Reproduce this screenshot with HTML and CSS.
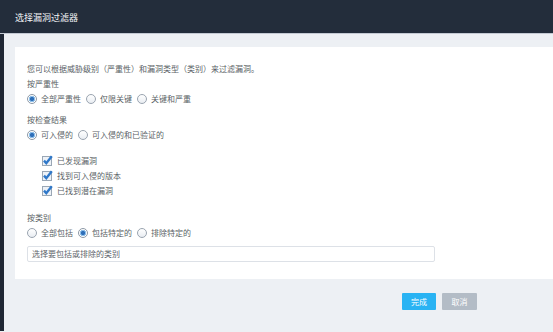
FILE: index.html
```html
<!DOCTYPE html>
<html lang="zh">
<head>
  <meta charset="UTF-8">
  <meta name="viewport" content="width=device-width, initial-scale=1.0">
  <title>选择漏洞过滤器</title>
  <link rel="stylesheet" href="styles.css">
</head>
<body>
  <header class="dialog-header">选择漏洞过滤器</header>
  <div class="dialog-body">
    <div class="panel">
      <p class="intro">您可以根据威胁级别（严重性）和漏洞类型（类别）来过滤漏洞。</p>
      <div class="group-title">按严重性</div>
      <div class="radio-row">
        <label class="opt"><input type="radio" name="sev" checked><span>全部严重性</span></label>
        <label class="opt"><input type="radio" name="sev"><span>仅限关键</span></label>
        <label class="opt"><input type="radio" name="sev"><span>关键和严重</span></label>
      </div>

      <div class="group-title gap">按检查结果</div>
      <div class="radio-row">
        <label class="opt"><input type="radio" name="res" checked><span>可入侵的</span></label>
        <label class="opt"><input type="radio" name="res"><span>可入侵的和已验证的</span></label>
      </div>

      <div class="checks">
        <label class="check"><span class="box"><svg width="11" height="11" viewBox="0 0 11 11"><rect x="0.5" y="1.5" width="9" height="9" fill="#eef2f7" stroke="#9aa7b5"/><path d="M2 5.6 L4.3 8.2 L9.8 1.2" fill="none" stroke="#2f78c9" stroke-width="2.4"/></svg></span>已发现漏洞</label>
        <label class="check"><span class="box"><svg width="11" height="11" viewBox="0 0 11 11"><rect x="0.5" y="1.5" width="9" height="9" fill="#eef2f7" stroke="#9aa7b5"/><path d="M2 5.6 L4.3 8.2 L9.8 1.2" fill="none" stroke="#2f78c9" stroke-width="2.4"/></svg></span>找到可入侵的版本</label>
        <label class="check"><span class="box"><svg width="11" height="11" viewBox="0 0 11 11"><rect x="0.5" y="1.5" width="9" height="9" fill="#eef2f7" stroke="#9aa7b5"/><path d="M2 5.6 L4.3 8.2 L9.8 1.2" fill="none" stroke="#2f78c9" stroke-width="2.4"/></svg></span>已找到潜在漏洞</label>
      </div>

      <div class="group-title gap-lg">按类别</div>
      <div class="radio-row">
        <label class="opt"><input type="radio" name="cat"><span>全部包括</span></label>
        <label class="opt"><input type="radio" name="cat" checked><span>包括特定的</span></label>
        <label class="opt"><input type="radio" name="cat"><span>排除特定的</span></label>
      </div>
      <div class="category-input">选择要包括或排除的类别</div>
    </div>
    <div class="footer">
      <button class="btn btn-primary">完成</button>
      <button class="btn btn-muted">取消</button>
    </div>
  </div>
</body>
</html>
```

FILE: styles.css
```css
body {
  margin: 0;
  width: 553px;
  height: 332px;
  overflow: hidden;
  background: #edf0f4;
  font-family: "Noto Sans CJK SC", "Noto Sans", sans-serif;
  color: #5a5f66;
}
.dialog-header {
  height: 34px;
  box-sizing: border-box;
  padding: 2px 0 0 15px;
  display: flex;
  align-items: center;
  background: #232d3b;
  color: #f2f4f7;
  font-size: 9px;
  border-bottom: 1px solid #c3c9d3;
}
.dialog-body {
  border-left: 4px solid #1f2734;
  height: 297px;
  box-sizing: border-box;
  padding: 13px 0 0 11px;
}
.panel {
  background: #fff;
  padding: 14px 0 17px 12px;
  font-size: 8px;
  line-height: 15px;
}
.intro {
  margin: 0;
}
.group-title.gap {
  margin-top: 6px;
}
.group-title.gap-lg {
  margin-top: 12px;
}
.radio-row {
  display: flex;
  align-items: center;
  height: 15px;
}
.opt {
  display: flex;
  align-items: center;
  margin-right: 5px;
}
.opt input {
  appearance: none;
  -webkit-appearance: none;
  width: 10px;
  height: 10px;
  margin: 0 4px 0 0;
  border: 1px solid #9aa4b0;
  border-radius: 50%;
  background: linear-gradient(#ffffff, #e9edf2);
  box-sizing: border-box;
}
.opt input:checked {
  background: radial-gradient(circle, #2f6fb8 0 1.8px, #8fc0ea 2.4px 3px, #ffffff 3.4px);
  border-color: #8c98a6;
}
.checks {
  margin-top: 11px;
  padding-left: 15px;
}
.check {
  display: flex;
  align-items: center;
  height: 15px;
}
.check .box {
  width: 11px;
  height: 11px;
  margin-right: 4px;
  display: flex;
}
.category-input {
  margin-top: 6px;
  width: 408px;
  height: 16px;
  box-sizing: border-box;
  border: 1px solid #dde1e7;
  border-radius: 2px;
  padding-left: 4px;
  line-height: 14px;
  color: #60656c;
}
.footer {
  display: flex;
  justify-content: flex-end;
  gap: 6px;
  padding: 14px 76px 0 0;
}
.btn {
  height: 17px;
  width: 35px;
  border: none;
  border-radius: 1px;
  color: #fff;
  font-family: inherit;
  font-size: 8px;
  padding: 0;
}
.btn-primary {
  width: 34px;
  background: #29b3f3;
}
.btn-muted {
  background: #b3bcc6;
}
```
